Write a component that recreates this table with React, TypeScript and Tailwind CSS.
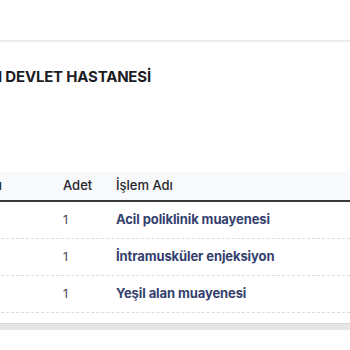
import React from "react"

type Row = { adet: number; ad: string }

const rows: Row[] = [
  { adet: 1, ad: "Acil poliklinik muayenesi" },
  { adet: 1, ad: "İntramusküler enjeksiyon" },
  { adet: 1, ad: "Yeşil alan muayenesi" },
]

export default function App() {
  return (
    <div className="w-[350px] h-[350px] overflow-hidden bg-white font-['Inter',sans-serif]">
      {/* üst bar */}
      <div className="h-[42px] border-b-2 border-[#ececec]" />

      {/* başlık */}
      <div className="pt-[24px] -ml-[2px] whitespace-nowrap text-[15px] leading-[22px] font-bold text-[#1c1c24] tracking-[-0.2px]">
        I DEVLET HASTANESİ
      </div>

      {/* tablo */}
      <div className="mt-[84px] -ml-[24px]">
        <div className="flex h-[30px] items-center bg-[#f8f9fa] border-b-2 border-[#3a3a3a] text-[13px] font-medium text-[#26262e]">
          <div className="w-[87px]">Tanı</div>
          <div className="w-[53px]">Adet</div>
          <div>İşlem Adı</div>
        </div>
        {rows.map((r, i) => (
          <div
            key={i}
            className="flex h-[37px] items-center border-b border-dashed border-[#dcdcdc]"
          >
            <div className="w-[87px]" />
            <div className="w-[53px] text-[12px] text-[#44444c]">{r.adet}</div>
            <div className="text-[13px] font-bold text-[#353f6e] tracking-[-0.1px]">{r.ad}</div>
          </div>
        ))}
      </div>

      {/* alt çubuk */}
      <div className="mt-[10px] h-[7px] bg-[#e6e6e6] border-t border-[#d6d6d6]" />
    </div>
  )
}
